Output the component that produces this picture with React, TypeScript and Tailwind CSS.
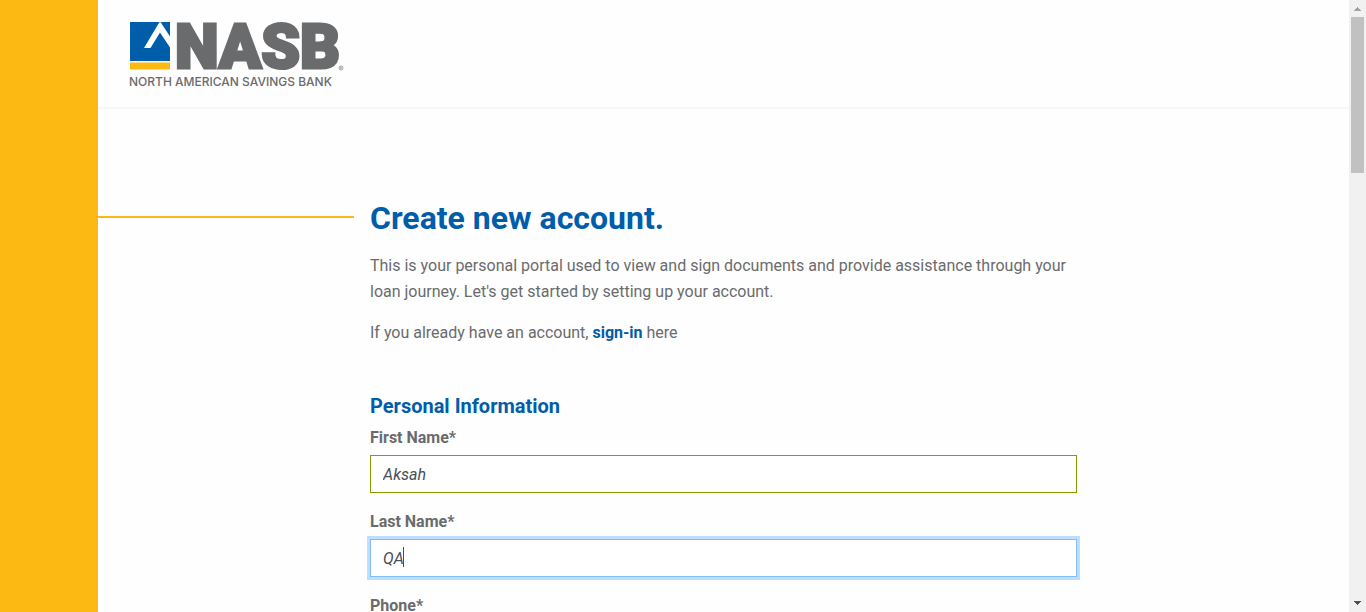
import { useState } from "react";

function Logo() {
  return (
    <svg
      width="214"
      height="68"
      viewBox="0 0 214 68"
      role="img"
      aria-label="NASB North American Savings Bank"
      className="overflow-visible"
    >
      <rect x="0" y="2" width="40" height="39" fill="#005daa" />
      <path d="M14 28 L29.5 2 H30.5 L40 16.5 V27.5 L30 12.5 L20.5 28 Z" fill="#fff" />
      <rect x="0" y="42.5" width="40" height="7" fill="#fdb913" />
      <text
        x="45"
        y="48"
        fontFamily="Roboto, sans-serif"
        fontWeight="900"
        fontSize="62"
        fill="#6a6b6d"
        stroke="#6a6b6d"
        strokeWidth="3"
      >
        NASB
      </text>
      <circle cx="211" cy="48" r="2" fill="none" stroke="#6a6b6d" strokeWidth="0.6" />
      <path d="M210.4 49 V47 H211.2 Q212 47.6 211.2 48.1 H210.4 M211.2 48.1 L211.8 49" fill="none" stroke="#6a6b6d" strokeWidth="0.4" />
      <text x="-1" y="66" fontFamily="Inter, sans-serif" fontWeight="500" fontSize="12" fill="#6a6b6d">
        NORTH AMERICAN SAVINGS BANK
      </text>
    </svg>
  );
}

type FieldProps = {
  id: string;
  label: string;
  initial: string;
  valid?: boolean;
  active?: boolean;
};

function Field({ id, label, initial, valid = false, active = false }: FieldProps) {
  const [value, setValue] = useState(initial);
  const [focused, setFocused] = useState(active);
  const showCaret = active && focused && value === initial;
  return (
    <div className="mb-4 flex flex-col gap-1">
      <label htmlFor={id} className="text-base leading-[26px] font-bold text-[#6a6b6d]">
        {label}
      </label>
      <div className="relative">
        <input
          id={id}
          type="text"
          value={value}
          autoFocus={active}
          onFocus={() => setFocused(true)}
          onBlur={() => setFocused(false)}
          onChange={(event) => setValue(event.target.value)}
          className={`block h-[38px] w-full border bg-white px-3 text-base text-[#495057] italic outline-none focus:border-[#80bdff] focus:ring-3 focus:ring-[#bfdeff] ${
            valid ? "border-[#869c00]" : "border-[#ced4da]"
          } ${showCaret ? "caret-transparent" : ""}`}
        />
        {showCaret && <span className="pointer-events-none absolute top-2 left-[33px] h-5 w-px bg-[#495057]" />}
      </div>
    </div>
  );
}

function ScrollTrack() {
  return (
    <div aria-hidden="true" className="flex w-[17px] shrink-0 flex-col items-center justify-between bg-[#f1f1f1]">
      <div className="flex w-full flex-col items-center">
        <svg width="17" height="17" viewBox="0 0 17 17" shapeRendering="crispEdges">
          <path d="M8 7h1v1h1v1h1v1h1v1H5v-1h1V9h1V8h1z" fill="#a3a3a3" />
        </svg>
        <div className="h-[156px] w-[13px] bg-[#c1c1c1]" />
      </div>
      <svg width="17" height="17" viewBox="0 0 17 17" shapeRendering="crispEdges">
        <path d="M5 6h7v1h-1v1h-1v1H9v1H8V9H7V8H6V7H5z" fill="#505050" />
      </svg>
    </div>
  );
}

export default function App() {
  return (
    <div className="flex h-screen bg-[#fefefe] font-['Roboto',sans-serif] text-[#6a6b6d]">
      <div className="w-[98px] shrink-0 bg-[#fdb913]" />
      <div className="min-w-0 flex-1 overflow-hidden">
        <header className="border-b-2 border-[#f7f7f7] px-8 pt-5 pb-[19px]">
          <a href="#home" className="block w-fit">
            <Logo />
          </a>
        </header>
        <main className="flex items-start gap-4 pt-[90px] pr-8">
          <div className="mt-[17px] h-0.5 w-64 shrink-0 bg-[#fdb913]" />
          <div className="max-w-[707px] min-w-0 flex-1">
            <h1 className="mb-4 text-[32px] leading-[38px] font-bold text-[#005daa]">Create new account.</h1>
            <p className="mb-[15px] text-base leading-[26px]">
              This is your personal portal used to view and sign documents and provide assistance through your loan
              journey. Let's get started by setting up your account.
            </p>
            <p className="mb-12 text-base leading-[26px]">
              If you already have an account,{" "}
              <a href="#sign-in" className="font-bold text-[#005daa]">
                sign-in
              </a>{" "}
              here
            </p>
            <form>
              <h2 className="mb-[7px] text-xl leading-6 font-bold text-[#005daa]">Personal Information</h2>
              <Field id="first-name" label="First Name*" initial="Aksah" valid />
              <Field id="last-name" label="Last Name*" initial="QA" active />
              <Field id="phone" label="Phone*" initial="" />
            </form>
          </div>
        </main>
      </div>
      <ScrollTrack />
    </div>
  );
}
